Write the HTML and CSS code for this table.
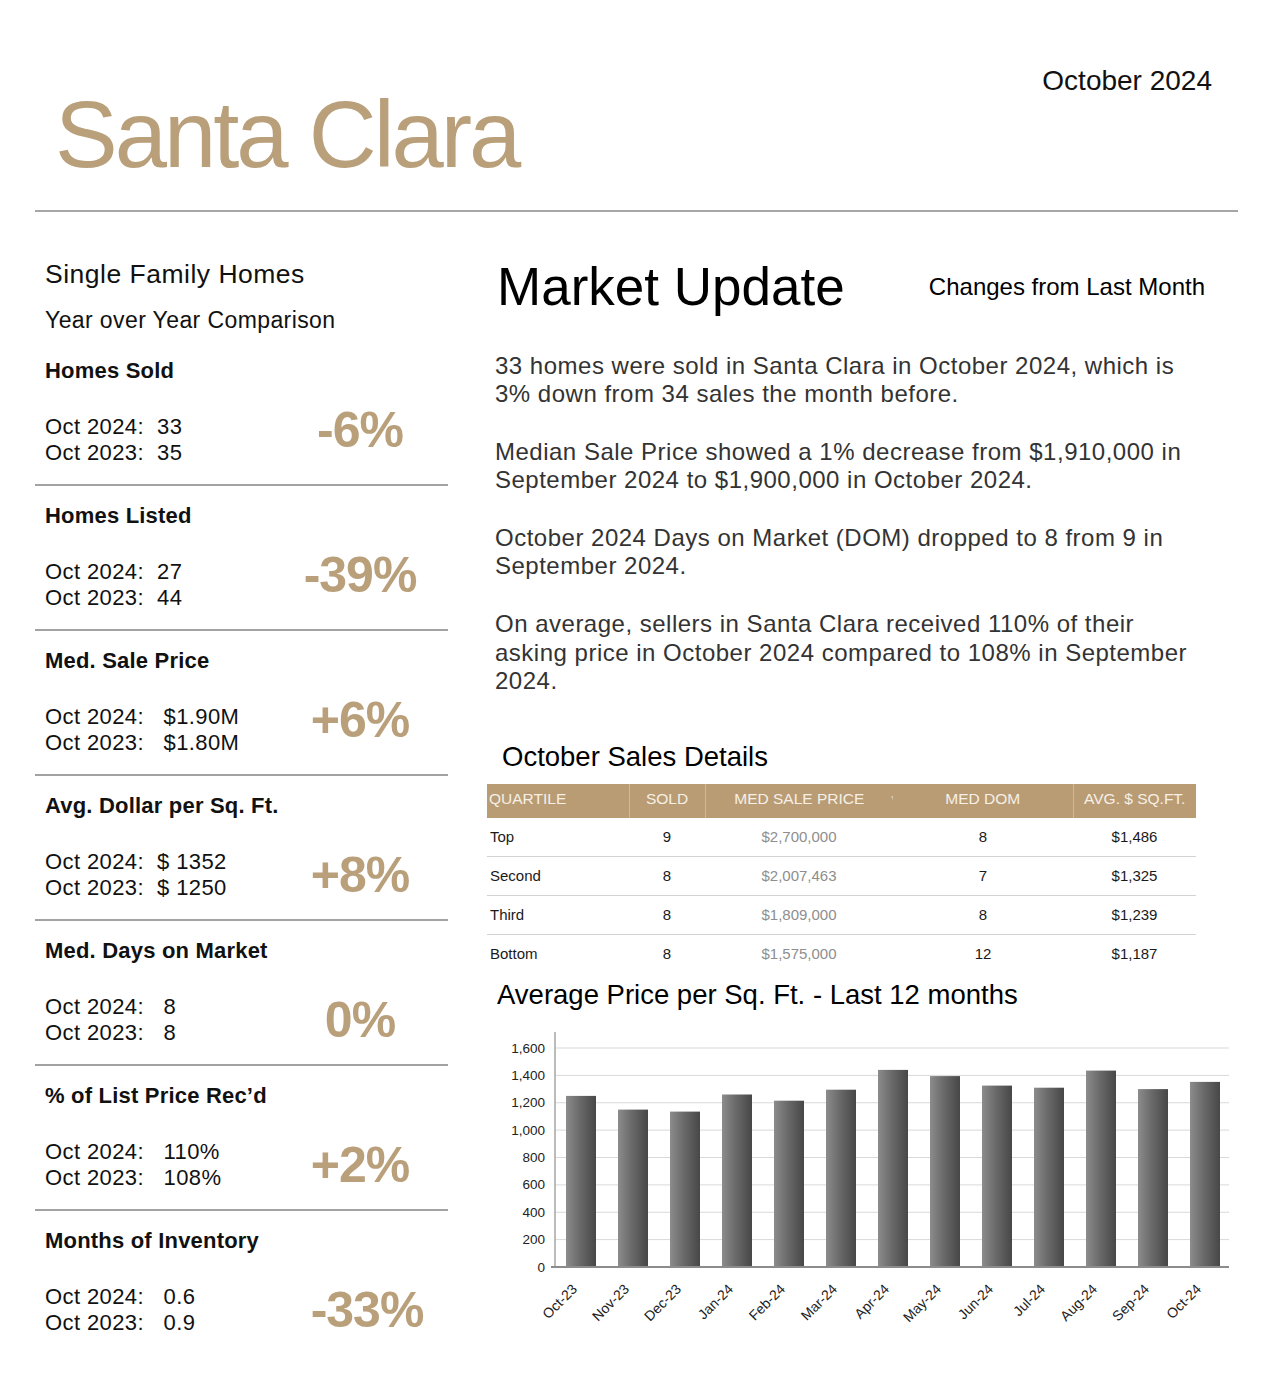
FILE: index.html
```
<!DOCTYPE html>
<html lang="en">
<head>
<meta charset="utf-8">
<title>Santa Clara Market Update - October 2024</title>
<link rel="stylesheet" href="styles.css">
</head>
<body>
<header class="masthead">
  <h1 class="city">Santa Clara</h1>
  <div class="issue-date">October 2024</div>
</header>
<hr class="rule">
<main class="main">
  <aside class="stats">
    <h2 class="stats-title">Single Family Homes</h2>
    <p class="stats-sub">Year over Year Comparison</p>

    <section class="stat stat-first">
      <h3 class="stat-name">Homes Sold</h3>
      <div class="stat-body">
        <div class="stat-lines"><div>Oct 2024:  33</div><div>Oct 2023:  35</div></div>
        <div class="stat-change stat-change-up">-6%</div>
      </div>
    </section>

    <section class="stat">
      <h3 class="stat-name">Homes Listed</h3>
      <div class="stat-body">
        <div class="stat-lines"><div>Oct 2024:  27</div><div>Oct 2023:  44</div></div>
        <div class="stat-change stat-change-up">-39%</div>
      </div>
    </section>

    <section class="stat">
      <h3 class="stat-name">Med. Sale Price</h3>
      <div class="stat-body">
        <div class="stat-lines"><div>Oct 2024:   $1.90M</div><div>Oct 2023:   $1.80M</div></div>
        <div class="stat-change stat-change-up">+6%</div>
      </div>
    </section>

    <section class="stat">
      <h3 class="stat-name">Avg. Dollar per Sq. Ft.</h3>
      <div class="stat-body">
        <div class="stat-lines"><div>Oct 2024:  $ 1352</div><div>Oct 2023:  $ 1250</div></div>
        <div class="stat-change">+8%</div>
      </div>
    </section>

    <section class="stat">
      <h3 class="stat-name">Med. Days on Market</h3>
      <div class="stat-body">
        <div class="stat-lines"><div>Oct 2024:   8</div><div>Oct 2023:   8</div></div>
        <div class="stat-change">0%</div>
      </div>
    </section>

    <section class="stat">
      <h3 class="stat-name">% of List Price Rec’d</h3>
      <div class="stat-body">
        <div class="stat-lines"><div>Oct 2024:   110%</div><div>Oct 2023:   108%</div></div>
        <div class="stat-change">+2%</div>
      </div>
    </section>

    <section class="stat">
      <h3 class="stat-name">Months of Inventory</h3>
      <div class="stat-body">
        <div class="stat-lines"><div>Oct 2024:   0.6</div><div>Oct 2023:   0.9</div></div>
        <div class="stat-change stat-change-wide">-33%</div>
      </div>
    </section>
  </aside>

  <div class="update">
    <div class="update-head">
      <h2 class="update-title">Market Update</h2>
      <div class="update-note">Changes from Last Month</div>
    </div>

    <div class="summary">
      <p>33 homes were sold in Santa Clara in October 2024, which is<br>3% down from 34 sales the month before.</p>
      <p>Median Sale Price showed a 1% decrease from $1,910,000 in<br>September 2024 to $1,900,000 in October 2024.</p>
      <p>October 2024 Days on Market (DOM) dropped to 8 from 9 in<br>September 2024.</p>
      <p>On average, sellers in Santa Clara received 110% of their<br>asking price in October 2024 compared to 108% in September<br>2024.</p>
    </div>

    <h3 class="sales-title">October Sales Details</h3>
    <table class="sales">
      <thead>
        <tr>
          <th class="c-q">QUARTILE</th>
          <th class="c-sold sep">SOLD</th>
          <th class="c-price sep sort">MED SALE PRICE</th>
          <th class="c-dom">MED DOM</th>
          <th class="c-avg sep">AVG. $ SQ.FT.</th>
        </tr>
      </thead>
      <tbody>
        <tr><td class="c-q">Top</td><td>9</td><td class="price">$2,700,000</td><td>8</td><td>$1,486</td></tr>
        <tr><td class="c-q">Second</td><td>8</td><td class="price">$2,007,463</td><td>7</td><td>$1,325</td></tr>
        <tr><td class="c-q">Third</td><td>8</td><td class="price">$1,809,000</td><td>8</td><td>$1,239</td></tr>
        <tr><td class="c-q">Bottom</td><td>8</td><td class="price">$1,575,000</td><td>12</td><td>$1,187</td></tr>
      </tbody>
    </table>

    <h3 class="chart-title">Average Price per Sq. Ft. - Last 12 months</h3>
    <svg class="chart" width="751" height="320" viewBox="0 0 751 320" xmlns="http://www.w3.org/2000/svg">
      <defs>
        <linearGradient id="barfill" x1="0" y1="0" x2="1" y2="0">
          <stop offset="0" stop-color="#8c8c8c"/>
          <stop offset="0.45" stop-color="#6a6a6a"/>
          <stop offset="1" stop-color="#474747"/>
        </linearGradient>
      </defs>
      <g class="grid">
        <line x1="68" y1="33" x2="742" y2="33"/>
        <line x1="68" y1="60.4" x2="742" y2="60.4"/>
        <line x1="68" y1="87.75" x2="742" y2="87.75"/>
        <line x1="68" y1="115.1" x2="742" y2="115.1"/>
        <line x1="68" y1="142.5" x2="742" y2="142.5"/>
        <line x1="68" y1="169.9" x2="742" y2="169.9"/>
        <line x1="68" y1="197.25" x2="742" y2="197.25"/>
        <line x1="68" y1="224.6" x2="742" y2="224.6"/>
      </g>
      <g class="ylabels">
        <text x="58" y="33">1,600</text>
        <text x="58" y="60.4">1,400</text>
        <text x="58" y="87.75">1,200</text>
        <text x="58" y="115.1">1,000</text>
        <text x="58" y="142.5">800</text>
        <text x="58" y="169.9">600</text>
        <text x="58" y="197.25">400</text>
        <text x="58" y="224.6">200</text>
        <text x="58" y="252">0</text>
      </g>
      <g class="bars">
        <rect x="79" y="80.9" width="30" height="171.1"/>
        <rect x="131" y="94.6" width="30" height="157.4"/>
        <rect x="183" y="96.6" width="30" height="155.4"/>
        <rect x="235" y="79.5" width="30" height="172.5"/>
        <rect x="287" y="85.7" width="30" height="166.3"/>
        <rect x="339" y="74.7" width="30" height="177.3"/>
        <rect x="391" y="54.9" width="30" height="197.1"/>
        <rect x="443" y="61.1" width="30" height="190.9"/>
        <rect x="495" y="70.6" width="30" height="181.4"/>
        <rect x="547" y="72.7" width="30" height="179.3"/>
        <rect x="599" y="55.6" width="30" height="196.4"/>
        <rect x="651" y="74.1" width="30" height="177.9"/>
        <rect x="703" y="66.9" width="30" height="185.1"/>
      </g>
      <line class="yaxis" x1="68" y1="17" x2="68" y2="252"/>
      <line class="xaxis" x1="64" y1="252" x2="742" y2="252"/>
      <g class="xlabels">
        <text transform="translate(91 275) rotate(-45)">Oct-23</text>
        <text transform="translate(143 275) rotate(-45)">Nov-23</text>
        <text transform="translate(195 275) rotate(-45)">Dec-23</text>
        <text transform="translate(247 275) rotate(-45)">Jan-24</text>
        <text transform="translate(299 275) rotate(-45)">Feb-24</text>
        <text transform="translate(351 275) rotate(-45)">Mar-24</text>
        <text transform="translate(403 275) rotate(-45)">Apr-24</text>
        <text transform="translate(455 275) rotate(-45)">May-24</text>
        <text transform="translate(507 275) rotate(-45)">Jun-24</text>
        <text transform="translate(559 275) rotate(-45)">Jul-24</text>
        <text transform="translate(611 275) rotate(-45)">Aug-24</text>
        <text transform="translate(663 275) rotate(-45)">Sep-24</text>
        <text transform="translate(715 275) rotate(-45)">Oct-24</text>
      </g>
    </svg>
  </div>
</main>
</body>
</html>
```
FILE: styles.css
```
* { box-sizing: border-box; }

body {
  margin: 0;
  background: #ffffff;
  color: #111111;
  font-family: "Liberation Sans", Arial, sans-serif;
}

/* ---------- masthead ---------- */
.masthead {
  display: flex;
  justify-content: space-between;
  align-items: flex-start;
  padding: 0 63px 0 55px;
}

.city {
  margin: 88px 0 0 0;
  font-size: 94px;
  line-height: 94px;
  font-weight: normal;
  letter-spacing: -3px;
  color: #b9a07b;
}

.issue-date {
  margin-top: 67px;
  font-size: 28px;
  line-height: 28px;
  color: #111111;
}

.rule {
  margin: 28px 37px 0 35px;
  border: 0;
  height: 2px;
  background: #a6a6a6;
}

/* ---------- layout ---------- */
.main {
  display: grid;
  grid-template-columns: 413px 751px;
  column-gap: 39px;
  margin-left: 35px;
  padding-bottom: 30px;
}

/* ---------- left stats column ---------- */
.stats-title {
  margin: 47px 0 0 0;
  padding-left: 10px;
  font-size: 26.5px;
  line-height: 30px;
  font-weight: normal;
  letter-spacing: 0.5px;
}

.stats-sub {
  margin: 18px 0 0 0;
  padding-left: 10px;
  font-size: 23px;
  line-height: 26px;
  letter-spacing: 0.4px;
}

.stat {
  border-top: 2px solid #a3a3a3;
  padding: 17px 0 18px 10px;
}

.stat-first {
  border-top: 0;
  margin-top: 25px;
  padding-top: 0;
}

.stat-name {
  margin: 0;
  font-size: 22px;
  line-height: 26px;
  font-weight: bold;
  letter-spacing: 0.2px;
  color: #111111;
}

.stat-body {
  display: flex;
  align-items: center;
  margin-top: 30px;
}

.stat-lines {
  width: 227px;
  font-size: 22px;
  line-height: 26px;
  letter-spacing: 0.4px;
  white-space: pre;
  color: #111111;
}

.stat-change {
  flex: 1;
  text-align: center;
  font-size: 50px;
  line-height: 52px;
  font-weight: bold;
  letter-spacing: -1px;
  color: #b9a07b;
}

.stat-change-up {
  align-self: flex-start;
  margin-top: -10px;
}

.stat-change-wide {
  padding-left: 14px;
}

/* ---------- right update column ---------- */
.update-head {
  display: flex;
  justify-content: space-between;
  align-items: center;
  height: 56px;
  margin-top: 47px;
  padding: 0 33px 0 10px;
}

.update-title {
  margin: 0;
  font-size: 53px;
  line-height: 56px;
  font-weight: normal;
  color: #000000;
}

.update-note {
  font-size: 24px;
  line-height: 28px;
  color: #000000;
}

.summary {
  margin-top: 36.6px;
  padding-left: 8px;
  font-size: 24px;
  line-height: 28.7px;
  letter-spacing: 0.5px;
  color: #333333;
  white-space: nowrap;
}

.summary p {
  margin: 0 0 28.7px 0;
}

.summary p:last-child {
  margin-bottom: 0;
}

.sales-title {
  margin: 45px 0 0 0;
  padding-left: 15px;
  font-size: 27.5px;
  line-height: 32px;
  font-weight: normal;
  color: #000000;
}

.sales {
  margin-top: 11px;
  width: 709px;
  border-collapse: collapse;
  table-layout: fixed;
  font-size: 15px;
}

.sales th {
  position: relative;
  height: 34px;
  padding: 0 0 4px 0;
  background: #b99c74;
  color: #f6f0e7;
  font-weight: normal;
  font-size: 15.5px;
  text-align: center;
}

.sales th.sep {
  border-left: 1px solid #cdb899;
}

.sales th.sort::after {
  content: "\25BE";
  position: absolute;
  right: -2px;
  top: 9px;
  font-size: 8px;
  color: #d8c9b2;
}

.sales .c-q { width: 142px; text-align: left; padding-left: 2px; }
.sales .c-sold { width: 76px; }
.sales .c-price { width: 188px; }
.sales .c-dom { width: 180px; }
.sales .c-avg { width: 123px; }

.sales td {
  height: 39px;
  padding: 0 0 2px 0;
  text-align: center;
  color: #1a1a1a;
  border-bottom: 1px solid #d3d3d3;
}

.sales td.c-q {
  padding-left: 3px;
}

.sales tr:last-child td {
  border-bottom: 0;
  height: 38px;
}

.sales td.price {
  color: #8e8e8e;
}

.chart-title {
  margin: 6px 0 0 0;
  padding-left: 10px;
  font-size: 27.5px;
  line-height: 32px;
  font-weight: normal;
  color: #000000;
}

.chart {
  display: block;
  margin-top: 4px;
  font-family: "Liberation Sans", Arial, sans-serif;
}

.grid line {
  stroke: #d9d9d9;
  stroke-width: 1;
}

.bars rect {
  fill: url(#barfill);
}

.yaxis {
  stroke: #a6a6a6;
  stroke-width: 1.5;
}

.xaxis {
  stroke: #8c8c8c;
  stroke-width: 2;
}

.ylabels text {
  font-size: 13.5px;
  fill: #222222;
  text-anchor: end;
  dominant-baseline: central;
}

.xlabels text {
  font-size: 14px;
  fill: #222222;
  text-anchor: end;
}
```
